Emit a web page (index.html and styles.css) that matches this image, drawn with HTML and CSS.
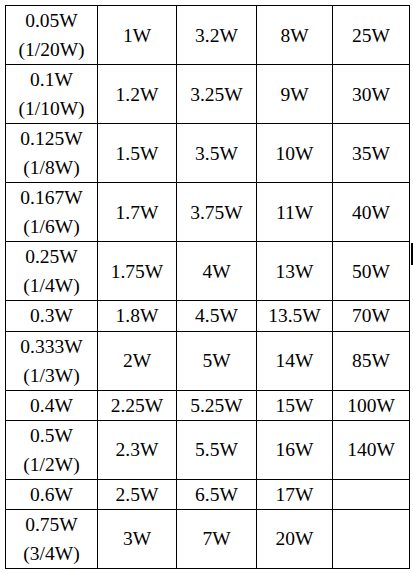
FILE: index.html
```html
<!DOCTYPE html>
<html>
<head>
<meta charset="utf-8">
<link rel="stylesheet" href="styles.css">
</head>
<body>
<table class="power-table">
<colgroup>
<col class="c1"><col class="c2"><col class="c3"><col class="c4"><col class="c5">
</colgroup>
<tbody>
<tr><td>0.05W<br>(1/20W)</td><td>1W</td><td>3.2W</td><td>8W</td><td>25W</td></tr>
<tr><td>0.1W<br>(1/10W)</td><td>1.2W</td><td>3.25W</td><td>9W</td><td>30W</td></tr>
<tr><td>0.125W<br>(1/8W)</td><td>1.5W</td><td>3.5W</td><td>10W</td><td>35W</td></tr>
<tr><td>0.167W<br>(1/6W)</td><td>1.7W</td><td>3.75W</td><td>11W</td><td>40W</td></tr>
<tr><td>0.25W<br>(1/4W)</td><td>1.75W</td><td>4W</td><td>13W</td><td>50W</td></tr>
<tr><td>0.3W</td><td>1.8W</td><td>4.5W</td><td>13.5W</td><td>70W</td></tr>
<tr><td>0.333W<br>(1/3W)</td><td>2W</td><td>5W</td><td>14W</td><td>85W</td></tr>
<tr><td>0.4W</td><td>2.25W</td><td>5.25W</td><td>15W</td><td>100W</td></tr>
<tr><td>0.5W<br>(1/2W)</td><td>2.3W</td><td>5.5W</td><td>16W</td><td>140W</td></tr>
<tr><td>0.6W</td><td>2.5W</td><td>6.5W</td><td>17W</td><td></td></tr>
<tr><td>0.75W<br>(3/4W)</td><td>3W</td><td>7W</td><td>20W</td><td></td></tr>
</tbody>
</table>
<div class="caret"></div>
</body>
</html>
```
FILE: styles.css
```css
html, body {
  margin: 0;
  padding: 0;
  background: #ffffff;
}
body {
  padding: 5px;
  font-family: "Liberation Serif", "Times New Roman", serif;
  color: #000000;
}
.power-table {
  border-collapse: collapse;
  table-layout: fixed;
  width: 405px;
  font-size: 19.5px;
  line-height: 29.05px;
}
.c1 { width: 92px; }
.c2 { width: 79px; }
.c3 { width: 80px; }
.c4 { width: 76px; }
.c5 { width: 77px; }
.power-table td {
  border: 1px solid #000000;
  padding: 0;
  text-align: center;
  vertical-align: middle;
  white-space: nowrap;
}
.caret {
  position: absolute;
  left: 411px;
  top: 243px;
  width: 2px;
  height: 22px;
  background: #000000;
}
```
